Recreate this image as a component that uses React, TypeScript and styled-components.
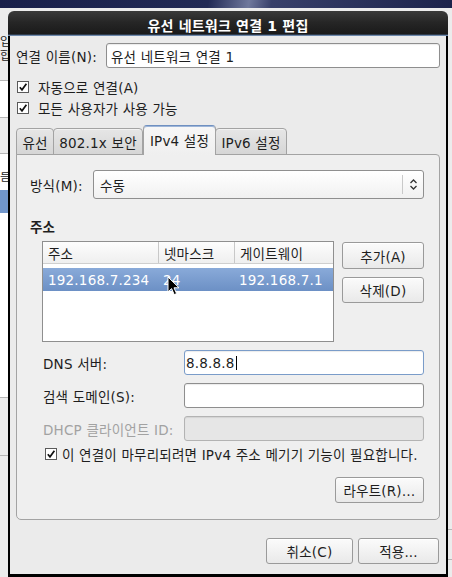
import React from "react";
import styled, { createGlobalStyle } from "styled-components";

const GlobalStyle = createGlobalStyle`
  html, body {
    margin: 0;
    padding: 0;
  }
  body {
    width: 452px;
    height: 577px;
    overflow: hidden;
    background: #ececec;
    font-family: "DejaVu Sans", "Noto Sans CJK KR", sans-serif;
    font-size: 13.5px;
    letter-spacing: 0.2px;
    color: #1e1e1e;
  }
`;

const Screen = styled.div`
  position: relative;
  width: 452px;
  height: 577px;
  display: flex;
  flex-direction: column;
  overflow: hidden;
`;

const Desktop = styled.div`
  height: 8px;
  flex: none;
  background: linear-gradient(
    100deg,
    #19204a 0%,
    #222a55 46%,
    #6f789c 55%,
    #38406a 60%,
    #1c234b 100%
  );
`;

const Workspace = styled.div`
  flex: 1;
  display: flex;
  min-height: 0;
`;

const Edge = styled.div<{ $w: number }>`
  width: ${(p) => p.$w}px;
  flex: none;
  display: flex;
  flex-direction: column;
  overflow: hidden;
`;

const Band = styled.div<{ $h?: number; $bg: string; $line?: boolean }>`
  flex: ${(p) => (p.$h ? "none" : "1")};
  height: ${(p) => (p.$h ? `${p.$h}px` : "auto")};
  background: ${(p) => p.$bg};
  border-bottom: ${(p) => (p.$line ? "1px solid #b6b6b6" : "none")};
  box-sizing: border-box;
  display: flex;
  flex-direction: column;
  font-size: 12px;
  line-height: 13px;
  white-space: nowrap;
  color: #222;
`;

const EdgeText = styled.div<{ $top: number }>`
  margin-top: ${(p) => p.$top}px;
  height: 13px;
  overflow: hidden;
`;

const Dialog = styled.div`
  width: 440px;
  flex: none;
  margin-top: 3px;
  display: flex;
  flex-direction: column;
`;

const TitleBar = styled.div`
  height: 25px;
  flex: none;
  box-sizing: border-box;
  border-radius: 6px 6px 0 0;
  background: linear-gradient(#3a3a3a, #262626 45%, #181818);
  box-shadow: inset 0 -1px 0 #6d88ab, inset 0 -2px 0 #2e3a4a;
  display: flex;
  align-items: center;
  justify-content: center;
  color: #ffffff;
  font-weight: bold;
  font-size: 14px;
  padding-top: 2px;
`;

const Body = styled.div`
  flex: 1;
  display: flex;
  flex-direction: column;
  background: #ebebeb;
  border-left: 2px solid #000;
  border-right: 2px solid #000;
  border-bottom: 3px solid #000;
  padding: 7px 6px 10px 6px;
`;

const NameRow = styled.div`
  display: flex;
  align-items: center;
  height: 25px;
`;

const NameLabel = styled.span`
  width: 90px;
  flex: none;
  white-space: nowrap;
`;

const TextField = styled.div<{ $focus?: boolean; $disabled?: boolean; $pad?: number }>`
  flex: 1;
  height: 100%;
  box-sizing: border-box;
  display: flex;
  align-items: center;
  padding-left: ${(p) => p.$pad ?? 4}px;
  border: 1px solid ${(p) => (p.$focus ? "#7a9cc9" : p.$disabled ? "#b3b3b3" : "#8e8e8e")};
  border-radius: 3px;
  background: ${(p) => (p.$disabled ? "#e6e6e6" : "#ffffff")};
  box-shadow: inset 0 1px 1px rgba(0, 0, 0, 0.08);
  white-space: nowrap;
`;

const Caret = styled.span`
  width: 1px;
  height: 14px;
  background: #000;
  margin-left: 1px;
`;

const CheckRow = styled.div<{ $h: number; $gap: number; $indent: number; $top?: number }>`
  height: ${(p) => p.$h}px;
  margin-top: ${(p) => p.$top ?? 0}px;
  display: flex;
  align-items: center;
  gap: ${(p) => p.$gap}px;
  padding-left: ${(p) => p.$indent}px;
  white-space: nowrap;
`;

const CheckBox = styled.span`
  width: 12px;
  height: 12px;
  box-sizing: border-box;
  border: 1px solid #5a5a5a;
  background: #fff;
  display: flex;
  flex: none;
`;

const Checks = styled.div`
  margin-top: 8px;
  display: flex;
  flex-direction: column;
`;

const TabStrip = styled.div`
  margin-top: 7px;
  margin-bottom: -1px;
  height: 30px;
  display: flex;
  align-items: flex-end;
  position: relative;
  z-index: 1;
`;

const Tab = styled.div<{ $active?: boolean; $w: number }>`
  box-sizing: border-box;
  width: ${(p) => p.$w}px;
  flex: none;
  height: ${(p) => (p.$active ? 30 : 27)}px;
  padding-bottom: ${(p) => (p.$active ? 2 : 0)}px;
  padding-top: ${(p) => (p.$active ? 0 : 1)}px;
  margin-left: ${(p) => (p.$active ? "0" : "-1px")};
  display: flex;
  align-items: center;
  justify-content: center;
  white-space: nowrap;
  border: 1px solid #a3a3a3;
  border-bottom: ${(p) => (p.$active ? "none" : "1px solid #a3a3a3")};
  border-top-color: ${(p) => (p.$active ? "#6f90c0" : "#a3a3a3")};
  border-radius: 4px 4px 0 0;
  background: ${(p) =>
    p.$active ? "linear-gradient(#f7f7f7, #efefef)" : "linear-gradient(#e6e6e6, #d6d6d6)"};
  box-shadow: ${(p) => (p.$active ? "inset 0 1px 0 #9db5d8" : "inset 0 1px 0 #f2f2f2")};
  &:first-child {
    margin-left: 0;
  }
`;

const Panel = styled.div`
  border: 1px solid #a3a3a3;
  border-radius: 0 4px 5px 5px;
  background: #efefef;
  padding: 15px 15px 16px 13px;
  display: flex;
  flex-direction: column;
`;

const MethodRow = styled.div`
  display: flex;
  align-items: center;
  height: 29px;
`;

const MethodLabel = styled.span`
  width: 63px;
  flex: none;
`;

const Combo = styled.div`
  flex: 1;
  height: 100%;
  box-sizing: border-box;
  border: 1px solid #8f8f8f;
  border-radius: 3px;
  background: linear-gradient(#ffffff, #f1f1f1);
  display: flex;
  align-items: center;
`;

const ComboText = styled.span`
  flex: 1;
  padding-left: 6px;
`;

const ComboArrow = styled.span`
  width: 20px;
  height: 19px;
  border-left: 1px solid #c9c9c9;
  display: flex;
  align-items: center;
  justify-content: center;
`;

const SectionTitle = styled.div`
  margin-top: 20px;
  height: 16px;
  line-height: 16px;
  font-weight: bold;
`;

const AddressArea = styled.div`
  margin-top: 6px;
  padding-left: 12px;
  display: flex;
  gap: 8px;
`;

const Table = styled.div`
  width: 292px;
  flex: none;
  height: 101px;
  box-sizing: border-box;
  border: 1px solid #8f8f8f;
  background: #fff;
  display: flex;
  flex-direction: column;
`;

const Columns = "115px 76px 1fr";

const HeaderRow = styled.div`
  height: 21px;
  display: grid;
  grid-template-columns: ${Columns};
  background: linear-gradient(#fdfdfd, #efefef);
  border-bottom: 1px solid #cfcfcf;
`;

const HeaderCell = styled.div`
  display: flex;
  align-items: center;
  padding-left: 5px;
  white-space: nowrap;
  & + & {
    border-left: 1px solid #c8c8c8;
  }
`;

const DataRow = styled.div<{ $selected?: boolean }>`
  margin-top: 4px;
  height: 23px;
  display: grid;
  grid-template-columns: ${Columns};
  background: ${(p) => (p.$selected ? "linear-gradient(#89aad9, #6c90c5)" : "transparent")};
  color: ${(p) => (p.$selected ? "#ffffff" : "inherit")};
`;

const DataCell = styled.div`
  display: flex;
  align-items: center;
  padding-left: 5px;
  white-space: nowrap;
`;

const SideButtons = styled.div`
  margin-top: 1px;
  width: 82px;
  flex: none;
  display: flex;
  flex-direction: column;
  gap: 8px;
`;

const Button = styled.div<{ $w?: number; $h?: number }>`
  width: ${(p) => (p.$w ? `${p.$w}px` : "100%")};
  height: ${(p) => p.$h ?? 26}px;
  box-sizing: border-box;
  border: 1px solid #9a9a9a;
  border-radius: 3px;
  background: linear-gradient(#fbfbfb, #e9e9e9);
  box-shadow: inset 0 1px 0 #ffffff;
  display: flex;
  align-items: center;
  justify-content: center;
  white-space: nowrap;
`;

const FieldGrid = styled.div`
  margin-top: 8px;
  padding-left: 13px;
  display: grid;
  grid-template-columns: 141px 1fr;
  grid-auto-rows: 25px;
  row-gap: 8px;
`;

const FieldLabel = styled.span<{ $disabled?: boolean }>`
  display: flex;
  align-items: center;
  white-space: nowrap;
  color: ${(p) => (p.$disabled ? "#a2a2a2" : "inherit")};
`;

const RouteRow = styled.div`
  margin-top: 15px;
  display: flex;
  justify-content: flex-end;
`;

const Footer = styled.div`
  margin-top: 18px;
  padding-right: 1px;
  display: flex;
  justify-content: flex-end;
  gap: 5px;
`;

const Pointer = styled.svg`
  position: absolute;
  left: 167px;
  top: 276px;
`;

const Check = () => (
  <CheckBox>
    <svg width="10" height="10" viewBox="0 0 10 10">
      <path d="M1.8 5.2 L4 7.8 L8.4 1.8" fill="none" stroke="#111" strokeWidth="1.7" />
    </svg>
  </CheckBox>
);

const App: React.FC = () => {
  return (
    <Screen>
      <GlobalStyle />
      <Desktop />
      <Workspace>
        <Edge $w={8}>
          <Band $h={73} $bg="#ececec" $line>
            <EdgeText $top={28}>입</EdgeText>
            <EdgeText $top={1}>합</EdgeText>
          </Band>
          <Band $h={37} $bg="#ffffff" $line />
          <Band $h={36} $bg="#ececec" $line />
          <Band $h={36} $bg="#ffffff">
            <EdgeText $top={17}>름</EdgeText>
          </Band>
          <Band $h={23} $bg="#7196cb" />
          <Band $h={185} $bg="#ffffff" $line />
          <Band $h={58} $bg="#ececec" $line />
          <Band $bg="#ececec" />
        </Edge>

        <Dialog>
          <TitleBar>유선 네트워크 연결 1 편집</TitleBar>
          <Body>
            <NameRow>
              <NameLabel>연결 이름(N):</NameLabel>
              <TextField>유선 네트워크 연결 1</TextField>
            </NameRow>

            <Checks>
              <CheckRow $h={21} $gap={9} $indent={1}>
                <Check />
                <span>자동으로 연결(A)</span>
              </CheckRow>
              <CheckRow $h={21} $gap={9} $indent={1}>
                <Check />
                <span>모든 사용자가 사용 가능</span>
              </CheckRow>
            </Checks>

            <TabStrip>
              <Tab $w={38}>유선</Tab>
              <Tab $w={90}>802.1x 보안</Tab>
              <Tab $w={73} $active>
                IPv4 설정
              </Tab>
              <Tab $w={72}>IPv6 설정</Tab>
            </TabStrip>

            <Panel>
              <MethodRow>
                <MethodLabel>방식(M):</MethodLabel>
                <Combo>
                  <ComboText>수동</ComboText>
                  <ComboArrow>
                    <svg width="9" height="13" viewBox="0 0 9 13">
                      <path
                        d="M1.5 5 L4.5 2 L7.5 5 M1.5 8 L4.5 11 L7.5 8"
                        fill="none"
                        stroke="#333"
                        strokeWidth="1.3"
                      />
                    </svg>
                  </ComboArrow>
                </Combo>
              </MethodRow>

              <SectionTitle>주소</SectionTitle>

              <AddressArea>
                <Table>
                  <HeaderRow>
                    <HeaderCell>주소</HeaderCell>
                    <HeaderCell>넷마스크</HeaderCell>
                    <HeaderCell>게이트웨이</HeaderCell>
                  </HeaderRow>
                  <DataRow $selected>
                    <DataCell>192.168.7.234</DataCell>
                    <DataCell>24</DataCell>
                    <DataCell>192.168.7.1</DataCell>
                  </DataRow>
                </Table>
                <SideButtons>
                  <Button $h={27}>추가(A)</Button>
                  <Button>삭제(D)</Button>
                </SideButtons>
              </AddressArea>

              <FieldGrid>
                <FieldLabel>DNS 서버:</FieldLabel>
                <TextField $focus $pad={1}>
                  8.8.8.8
                  <Caret />
                </TextField>
                <FieldLabel>검색 도메인(S):</FieldLabel>
                <TextField />
                <FieldLabel $disabled>DHCP 클라이언트 ID:</FieldLabel>
                <TextField $disabled />
              </FieldGrid>

              <CheckRow $h={16} $gap={5} $indent={15} $top={5}>
                <Check />
                <span>이 연결이 마무리되려면 IPv4 주소 메기기 기능이 필요합니다.</span>
              </CheckRow>

              <RouteRow>
                <Button $w={89}>라우트(R)…</Button>
              </RouteRow>
            </Panel>

            <Footer>
              <Button $w={87}>취소(C)</Button>
              <Button $w={81}>적용...</Button>
            </Footer>
          </Body>
        </Dialog>

        <Edge $w={4}>
          <Band $h={522} $bg="#ececec" $line />
          <Band $h={30} $bg="#ececec" $line />
          <Band $bg="#ececec" />
        </Edge>
      </Workspace>

      <Pointer width="14" height="21" viewBox="0 0 14 21">
        <path
          d="M1 1 L1 16 L4.6 12.6 L7.2 18.6 L9.6 17.6 L7 11.8 L12 11.8 Z"
          fill="#000"
          stroke="#fff"
          strokeWidth="1"
          strokeLinejoin="round"
        />
      </Pointer>
    </Screen>
  );
};

export default App;
